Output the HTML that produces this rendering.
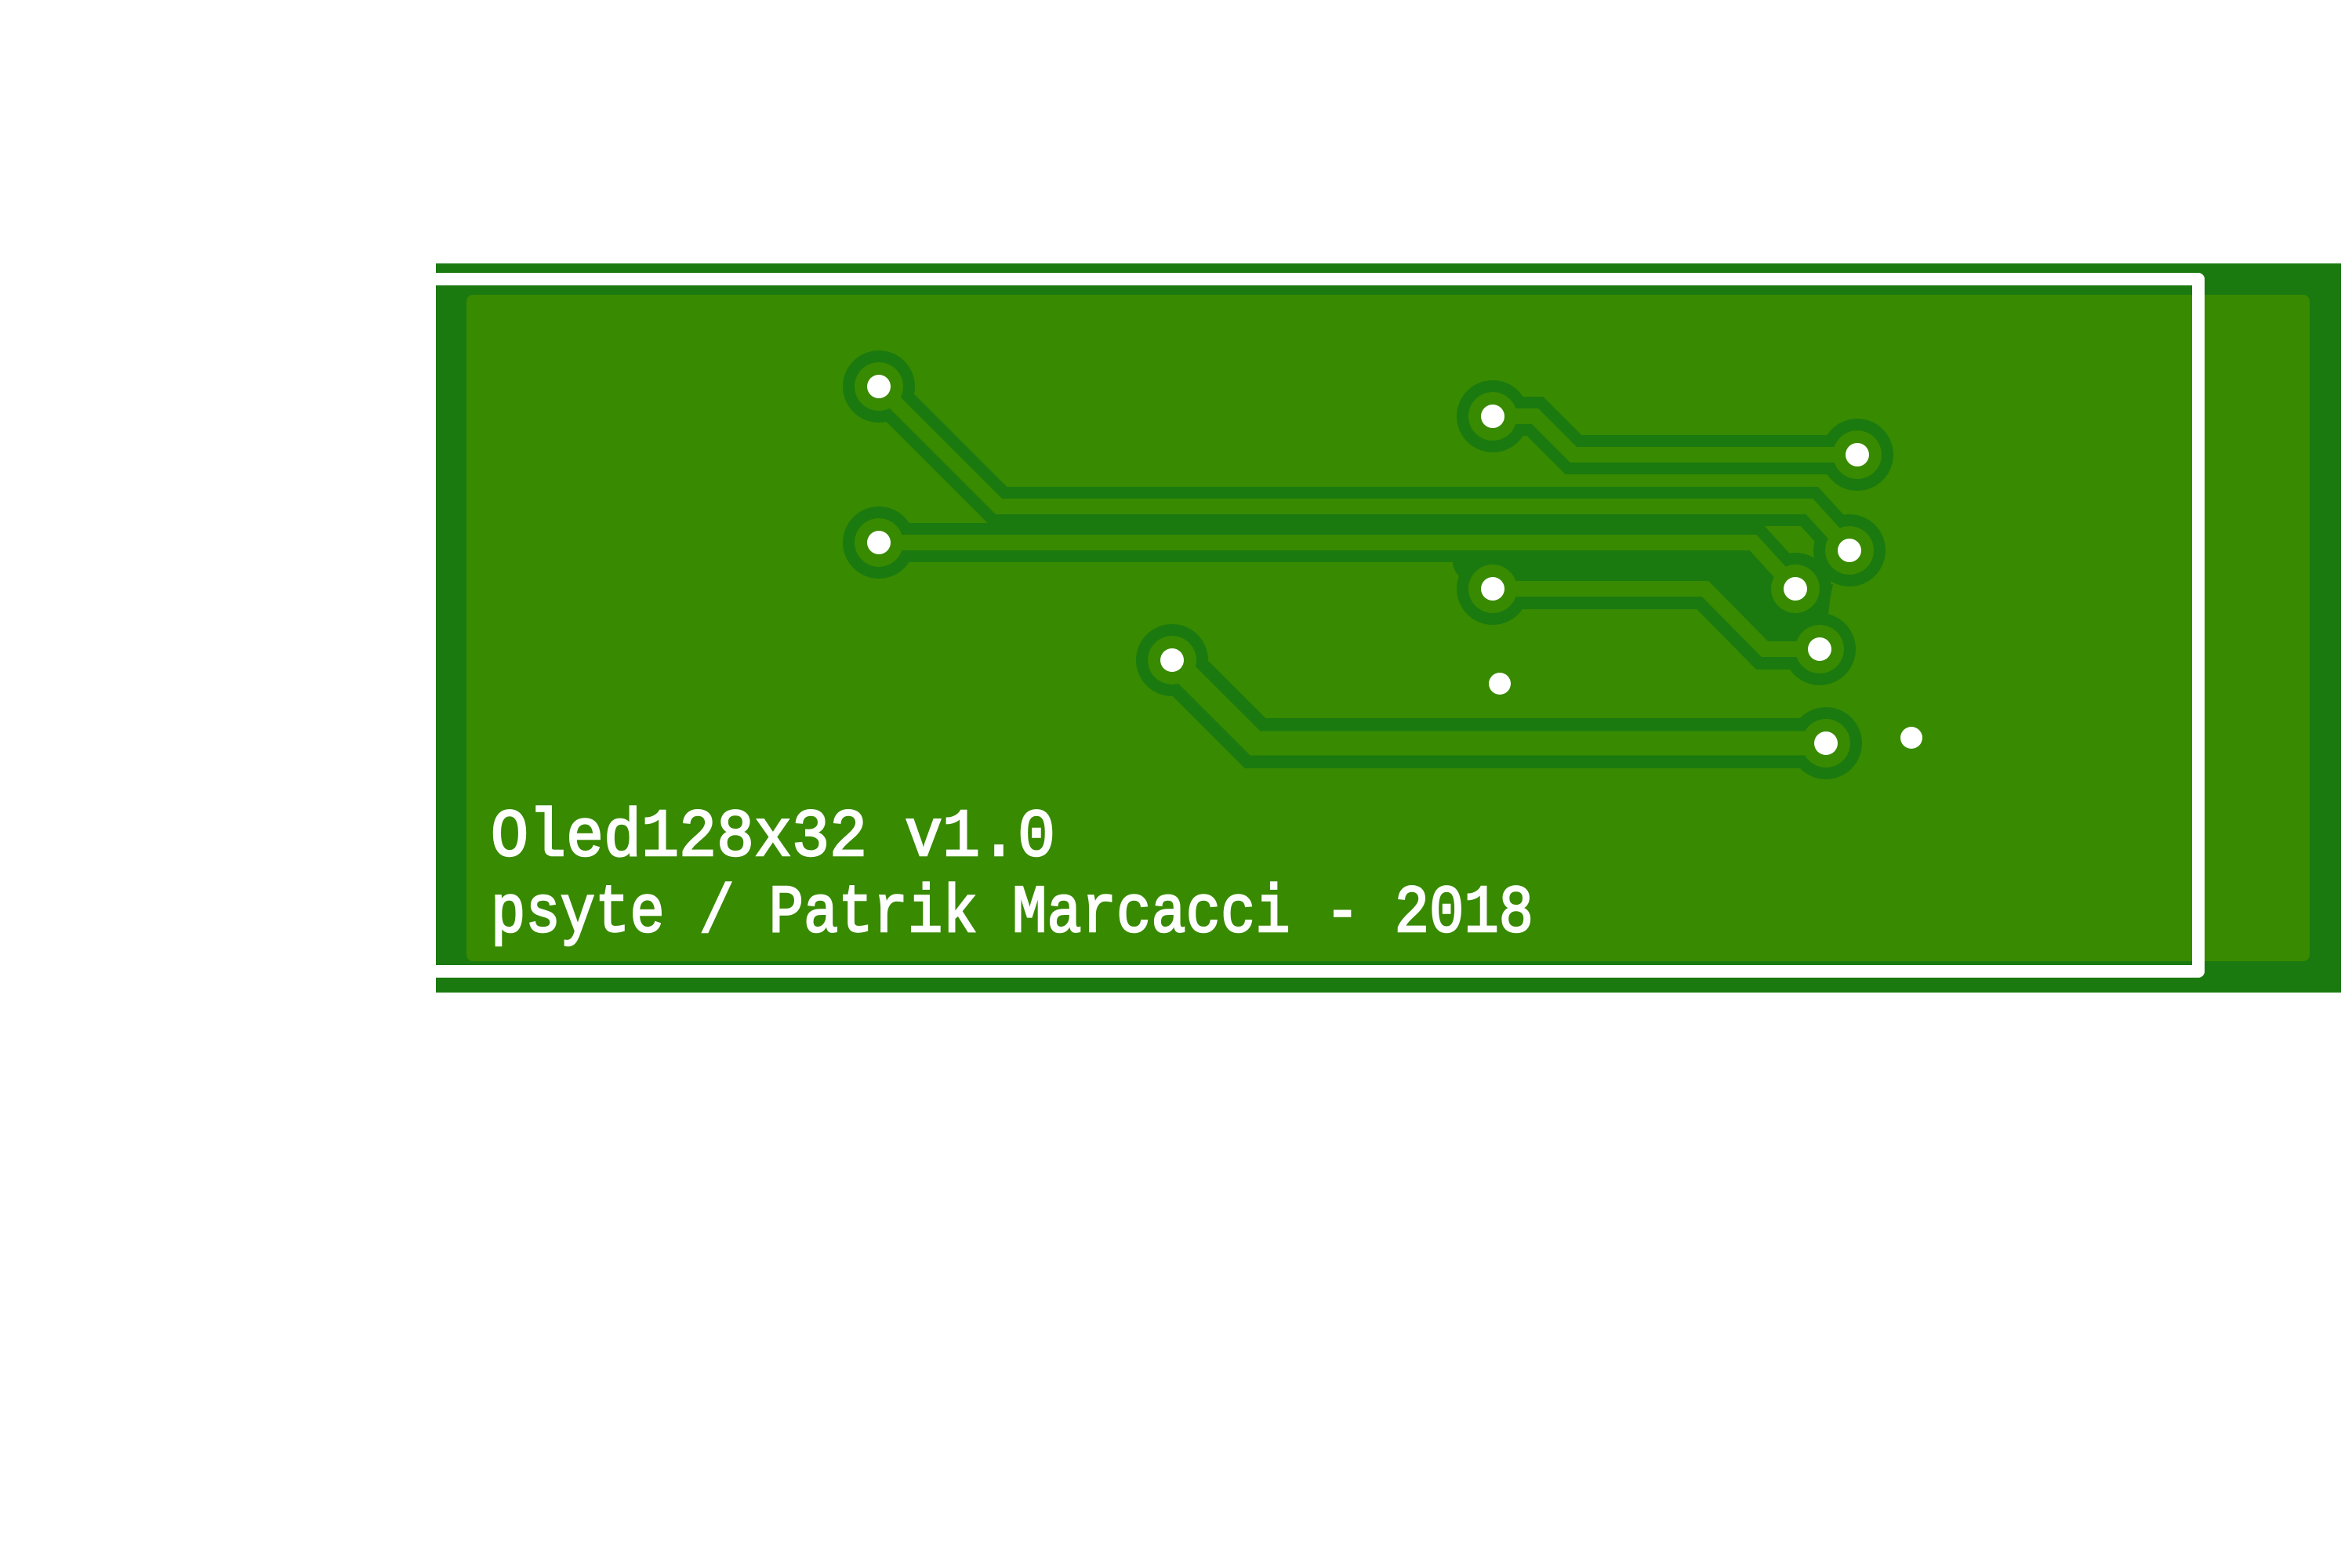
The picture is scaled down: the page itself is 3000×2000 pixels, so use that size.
<!DOCTYPE html>
<html>
<head>
<meta charset="utf-8">
<style>
html,body{margin:0;padding:0;background:#fff;}
svg{display:block;}
</style>
</head>
<body>
<svg width="3000" height="2000" viewBox="0 0 3000 2000" xmlns="http://www.w3.org/2000/svg">
  <rect x="0" y="0" width="3000" height="2000" fill="#ffffff"/>
  <rect x="556" y="336" width="2430" height="930" fill="#1a7a0f"/>
  <rect x="595" y="376" width="2351" height="850" rx="8" fill="#388a00"/>

  <path d="M1853 700 L2236 700 L2290 752 L2338 745 L2334 765 L2332 785 L2340 800 L2321 828 L2255 822 L2180 744 L1870 744 Q1853 730 1853 717 Z" fill="#1a7a0f"/>

  <g fill="none" stroke="#1a7a0f" stroke-linejoin="miter" stroke-linecap="butt">
    <path d="M1121 493 L1274 646 L2308 646 L2359 702" stroke-width="50"/>
    <path d="M1121 692 L2236 692 L2290 751" stroke-width="50"/>
    <path d="M1904 531 L1958 531 L2007 580 L2369 580" stroke-width="50"/>
    <path d="M1904 751 L2175 751 L2251 828 L2321 828" stroke-width="52"/>
    <path d="M1495 842 L1601 948 L2329 948" stroke-width="64"/>
  </g>
  <g fill="#1a7a0f">
    <circle cx="1121" cy="493" r="46"/>
    <circle cx="1121" cy="692" r="46"/>
    <circle cx="1495" cy="842" r="46"/>
    <circle cx="1904" cy="531" r="46"/>
    <circle cx="2369" cy="580" r="46"/>
    <circle cx="2359" cy="702" r="46"/>
    <circle cx="1904" cy="751" r="46"/>
    <circle cx="2290" cy="751" r="46"/>
    <circle cx="2321" cy="828" r="46"/>
    <circle cx="2329" cy="948" r="46"/>
  </g>
  <g fill="none" stroke="#388a00" stroke-linejoin="miter" stroke-linecap="butt">
    <path d="M1121 493 L1274 646 L2308 646 L2359 702" stroke-width="20"/>
    <path d="M1121 692 L2236 692 L2290 751" stroke-width="20"/>
    <path d="M1904 531 L1958 531 L2007 580 L2369 580" stroke-width="20"/>
    <path d="M1904 751 L2175 751 L2251 828 L2321 828" stroke-width="20"/>
    <path d="M1495 842 L1601 948 L2329 948" stroke-width="31"/>
  </g>
  <g fill="#388a00">
    <circle cx="1121" cy="493" r="31"/>
    <circle cx="1121" cy="692" r="31"/>
    <circle cx="1495" cy="842" r="31"/>
    <circle cx="1904" cy="531" r="31"/>
    <circle cx="2369" cy="580" r="31"/>
    <circle cx="2359" cy="702" r="31"/>
    <circle cx="1904" cy="751" r="31"/>
    <circle cx="2290" cy="751" r="31"/>
    <circle cx="2321" cy="828" r="31"/>
    <circle cx="2329" cy="948" r="31"/>
  </g>
  <g fill="#ffffff">
    <circle cx="1121" cy="493" r="15"/>
    <circle cx="1121" cy="692" r="15"/>
    <circle cx="1495" cy="842" r="15"/>
    <circle cx="1904" cy="531" r="15"/>
    <circle cx="2369" cy="580" r="15"/>
    <circle cx="2359" cy="702" r="15"/>
    <circle cx="1904" cy="751" r="15"/>
    <circle cx="2290" cy="751" r="15"/>
    <circle cx="2321" cy="828" r="15"/>
    <circle cx="2329" cy="948" r="15"/>
    <circle cx="1913" cy="872" r="14"/>
    <circle cx="2438" cy="941" r="14"/>
  </g>

  <path d="M556 356 L2804 356 L2804 1239 L556 1239" fill="none" stroke="#ffffff" stroke-width="16" stroke-linejoin="round"/>

  <g fill="#ffffff" stroke="#ffffff" stroke-width="2.5" font-family="'Liberation Mono', 'DejaVu Sans Mono', monospace" font-size="86">
    <text x="626" y="1091" textLength="720" lengthAdjust="spacingAndGlyphs">Oled128x32 v1.0</text>
    <text x="626" y="1188" textLength="1330" lengthAdjust="spacingAndGlyphs">psyte / Patrik Marcacci - 2018</text>
  </g>
</svg>
</body>
</html>
